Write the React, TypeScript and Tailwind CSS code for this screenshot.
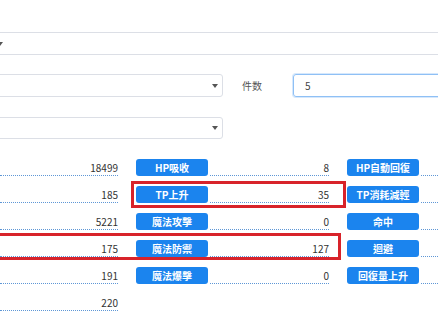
const rows: { v1: string; b1?: string; v2?: string; b2?: string }[] = [
  { v1: '18499', b1: 'HP吸收', v2: '8', b2: 'HP自動回復' },
  { v1: '185', b1: 'TP上升', v2: '35', b2: 'TP消耗減輕' },
  { v1: '5221', b1: '魔法攻擊', v2: '0', b2: '命中' },
  { v1: '175', b1: '魔法防禦', v2: '127', b2: '迴避' },
  { v1: '191', b1: '魔法爆擊', v2: '0', b2: '回復量上升' },
  { v1: '220' },
];

function Caret() {
  return (
    <svg width="6" height="4" viewBox="0 0 6 4" className="shrink-0">
      <path d="M0 0h6L3 4z" fill="#555" />
    </svg>
  );
}

function StatButton({ label }: { label: string }) {
  return (
    <div className="w-[72px] h-[17px] shrink-0 rounded-[3px] bg-[#1b84ee] text-white text-[10px] font-bold leading-[17px] text-center">
      {label}
    </div>
  );
}

function ValueCell({ value, className }: { value: string; className: string }) {
  return (
    <div
      className={`h-[17px] shrink-0 flex items-center justify-end text-[10px] text-[#333] border-b border-dotted border-[#5e97d6] ${className}`}
    >
      {value}
    </div>
  );
}

export default function App() {
  return (
    <div className="relative w-[438px] h-[321px] overflow-hidden bg-white font-['Noto_Sans_CJK_TC','Noto_Sans',sans-serif]">
      <div className="pt-[32px]">
        {/* top select + input, mostly off to the left */}
        <div className="h-[23px] border-y border-[#dcdfe6] flex items-center">
          <div className="-ml-[3px]">
            <Caret />
          </div>
        </div>

        {/* select + 件数 */}
        <div className="mt-[19px] flex items-center h-[23px]">
          <div className="-ml-[10px] w-[233px] h-[23px] border border-[#dcdfe6] rounded-[3px] flex items-center justify-end pr-[4px]">
            <Caret />
          </div>
          <span className="ml-[19px] w-[51px] text-[10px] text-[#555]">件数</span>
          <div className="flex-1 -mr-[20px] h-[23px] border border-[#8fc0f5] rounded-[3px] shadow-[0_0_0_1px_#d6e8fc] flex items-center pl-[11px] text-[10px] text-[#444]">
            5
          </div>
        </div>

        <div className="mt-[20px] flex items-center h-[22px]">
          <div className="-ml-[10px] w-[233px] h-[22px] border border-[#dcdfe6] rounded-[3px] flex items-center justify-end pr-[4px]">
            <Caret />
          </div>
        </div>

        {/* stats table */}
        <div className="mt-[10px]">
          {rows.map((r) => (
            <div key={r.v1 + (r.b1 ?? '')} className="h-[27px] flex items-end">
              <ValueCell value={r.v1} className="w-[118px] mr-[18px]" />
              {r.b1 && <StatButton label={r.b1} />}
              {r.v2 && (
                <>
                  <ValueCell value={r.v2} className="ml-[2px] w-[119px] mr-[18px]" />
                  <StatButton label={r.b2 ?? ''} />
                  <div className="ml-[2px] flex-1 h-[17px] border-b border-dotted border-[#5e97d6]" />
                </>
              )}
            </div>
          ))}
        </div>
      </div>

      {/* red highlight annotations */}
      <div className="absolute left-[131px] top-[181px] w-[215px] h-[27px] border-[3px] border-[#d8232a]" />
      <div className="absolute left-[-6px] top-[233px] w-[347px] h-[27px] border-[3px] border-[#d8232a]" />
    </div>
  );
}
